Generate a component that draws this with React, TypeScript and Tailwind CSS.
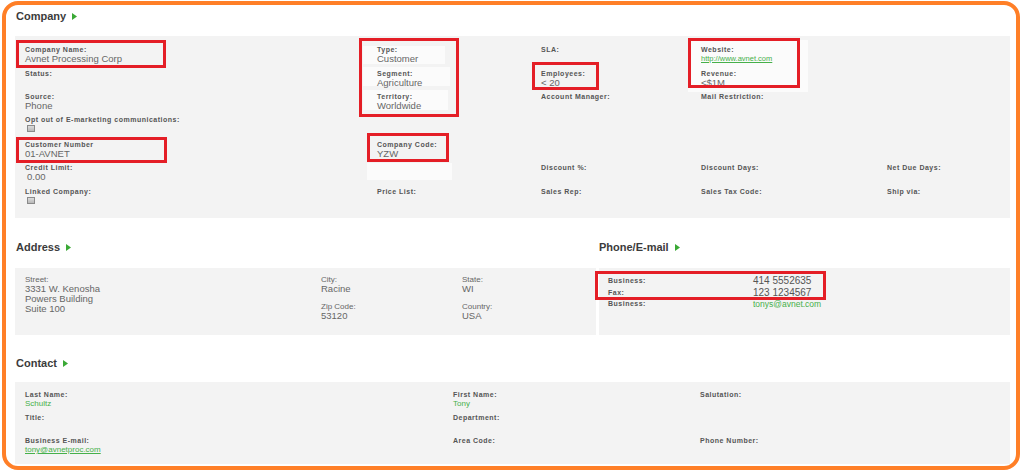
import React from 'react';

const font = { fontFamily: '"Liberation Sans", Arial, sans-serif' };

// label used in the contact and phone panels
const Label = ({ children }: { children: React.ReactNode }) => (
  <div className="text-[7px] font-bold tracking-[0.5px] leading-[9px] text-[#555] whitespace-nowrap">{children}</div>
);

// company panel packs its labels a little tighter
const CLabel = ({ children }: { children: React.ReactNode }) => (
  <div className="text-[7px] font-bold tracking-[0.5px] leading-[8px] text-[#555] whitespace-nowrap">{children}</div>
);

const Value = ({ children }: { children: React.ReactNode }) => (
  <div className="text-[9.5px] leading-[10px] text-[#666] whitespace-nowrap">{children}</div>
);

const Green = ({ children, underline }: { children: React.ReactNode; underline?: boolean }) => (
  <div className={`text-[8px] leading-[9px] text-[#46b04a] whitespace-nowrap ${underline ? 'underline' : ''}`}>{children}</div>
);

const Check = () => (
  <div className="ml-[2px] mt-[1px] w-[8px] h-[7px] border border-[#8a8a8a] bg-gradient-to-b from-[#dcdcdc] to-[#b8b8b8]" />
);

const Head = ({ title }: { title: string }) => (
  <div className="flex items-center gap-[6px] text-[11px] font-bold leading-[13px] text-[#3b3b3b]">
    {title}
    <svg width="5" height="7" viewBox="0 0 5 7">
      <polygon points="0,0 5,3.5 0,7" fill="#3aa935" />
    </svg>
  </div>
);

const Red = ({ className }: { className: string }) => (
  <div className={`absolute border-[3px] border-[#e41e26] pointer-events-none ${className}`} />
);

export default function App() {
  return (
    <div className="relative w-[1024px] h-[475px] bg-white pt-[1px] pl-[2px] overflow-hidden" style={font}>
      <div className="w-[1018px] h-[469px] border-4 border-[#ff7f27] rounded-[16px] overflow-hidden bg-white pl-[9px] pr-[6px] pt-[5px]">
        {/* Company */}
        <div className="h-[26px] pl-[1px]">
          <Head title="Company" />
        </div>
        <div className="h-[182px] bg-[#f3f3f3] pl-[10px] pt-[10px] grid grid-cols-[352px_164px_160px_186px_1fr] grid-rows-[24px_23px_23px_25px_23px_24px_auto]">
          <div><CLabel>Company Name:</CLabel><Value>Avnet Processing Corp</Value></div>
          <div><div className="-ml-[14px] pl-[14px] w-[82px] h-[18px] bg-[#fbfbfb]"><CLabel>Type:</CLabel><Value>Customer</Value></div></div>
          <div><CLabel>SLA:</CLabel></div>
          <div className="row-span-2"><div className="-ml-[13px] pl-[13px] -mt-[6px] pt-[6px] w-[120px] h-[52px] bg-[#fbfbfb]">
            <div className="h-[24px]"><CLabel>Website:</CLabel><div className="text-[7.5px] leading-[10px] text-[#46b04a] underline whitespace-nowrap">http://www.avnet.com</div></div>
            <CLabel>Revenue:</CLabel><Value>&lt;$1M</Value>
          </div></div>
          <div />

          <div><CLabel>Status:</CLabel></div>
          <div><div className="-ml-[14px] pl-[14px] w-[87px] h-[19px] bg-[#fbfbfb] -mt-[3px] pt-[3px]"><CLabel>Segment:</CLabel><Value>Agriculture</Value></div></div>
          <div><CLabel>Employees:</CLabel><Value>&lt; 20</Value></div>
          <div />

          <div><CLabel>Source:</CLabel><Value>Phone</Value></div>
          <div><div className="-ml-[14px] pl-[14px] w-[85px] h-[20px] bg-[#fbfbfb] -mt-[3px] pt-[3px]"><CLabel>Territory:</CLabel><Value>Worldwide</Value></div></div>
          <div><CLabel>Account Manager:</CLabel></div>
          <div><CLabel>Mail Restriction:</CLabel></div>
          <div />

          <div><CLabel>Opt out of E-marketing communications:</CLabel><Check /></div>
          <div /><div /><div /><div />

          <div><CLabel>Customer Number</CLabel><Value>01-AVNET</Value></div>
          <div><CLabel>Company Code:</CLabel><Value>YZW</Value></div>
          <div /><div /><div />

          <div><CLabel>Credit Limit:</CLabel><div className="pl-[2px]"><Value>0.00</Value></div></div>
          <div><div className="-ml-[10px] w-[85px] h-[17px] bg-[#fbfbfb] -mt-[1px]" /></div>
          <div><CLabel>Discount %:</CLabel></div>
          <div><CLabel>Discount Days:</CLabel></div>
          <div><CLabel>Net Due Days:</CLabel></div>

          <div><CLabel>Linked Company:</CLabel><Check /></div>
          <div><CLabel>Price List:</CLabel></div>
          <div><CLabel>Sales Rep:</CLabel></div>
          <div><CLabel>Sales Tax Code:</CLabel></div>
          <div><CLabel>Ship via:</CLabel></div>
        </div>

        {/* Address + Phone */}
        <div className="flex gap-[3px]">
          <div className="w-[581px]">
            <div className="h-[50px] pt-[23px] pl-[1px]"><Head title="Address" /></div>
            <div className="h-[67px] bg-[#f3f3f3] pl-[10px] pt-[7px] grid grid-cols-[296px_141px_1fr]">
              <div>
                <div className="text-[8px] leading-[9px] text-[#666]">Street:</div>
                <Value>3331 W. Kenosha</Value>
                <Value>Powers Building</Value>
                <Value>Suite 100</Value>
              </div>
              <div>
                <div className="text-[8px] leading-[9px] text-[#666]">City:</div>
                <Value>Racine</Value>
                <div className="mt-[8px] text-[8px] leading-[9px] text-[#666]">Zip Code:</div>
                <Value>53120</Value>
              </div>
              <div>
                <div className="text-[8px] leading-[9px] text-[#666]">State:</div>
                <Value>WI</Value>
                <div className="mt-[8px] text-[8px] leading-[9px] text-[#666]">Country:</div>
                <Value>USA</Value>
              </div>
            </div>
          </div>
          <div className="flex-1">
            <div className="h-[50px] pt-[23px]"><Head title="Phone/E-mail" /></div>
            <div className="h-[67px] bg-[#f3f3f3] pl-[9px] pt-[7px]">
              <div className="flex items-center h-[11px]">
                <div className="w-[145px]"><Label>Business:</Label></div>
                <div className="text-[10px] leading-[11px] text-[#555]">414 5552635</div>
              </div>
              <div className="flex items-center h-[12px]">
                <div className="w-[145px]"><Label>Fax:</Label></div>
                <div className="text-[10px] leading-[11px] text-[#555]">123 1234567</div>
              </div>
              <div className="flex items-center h-[11px]">
                <div className="w-[145px]"><Label>Business:</Label></div>
                <div className="text-[8.5px] leading-[10px] text-[#46b04a]">tonys@avnet.com</div>
              </div>
            </div>
          </div>
        </div>

        {/* Contact */}
        <div className="h-[47px] pt-[22px] pl-[1px]"><Head title="Contact" /></div>
        <div className="h-[82px] bg-[#f3f3f3] pl-[10px] pt-[8px] grid grid-cols-[428px_247px_1fr] grid-rows-[23px_23px_auto]">
          <div><Label>Last Name:</Label><Green>Schultz</Green></div>
          <div><Label>First Name:</Label><Green>Tony</Green></div>
          <div><Label>Salutation:</Label></div>
          <div><Label>Title:</Label></div>
          <div><Label>Department:</Label></div>
          <div />
          <div><Label>Business E-mail:</Label><Green underline>tony@avnetproc.com</Green></div>
          <div><Label>Area Code:</Label></div>
          <div><Label>Phone Number:</Label></div>
        </div>
      </div>

      {/* annotation boxes */}
      <Red className="left-[16px] top-[40px] w-[150px] h-[28px]" />
      <Red className="left-[359px] top-[38px] w-[100px] h-[79px]" />
      <Red className="left-[532px] top-[62px] w-[67px] h-[28px]" />
      <Red className="left-[688px] top-[38px] w-[112px] h-[50px]" />
      <Red className="left-[16px] top-[137px] w-[151px] h-[26px]" />
      <Red className="left-[367px] top-[133px] w-[82px] h-[29px]" />
      <Red className="left-[595px] top-[271px] w-[231px] h-[29px]" />
    </div>
  );
}
